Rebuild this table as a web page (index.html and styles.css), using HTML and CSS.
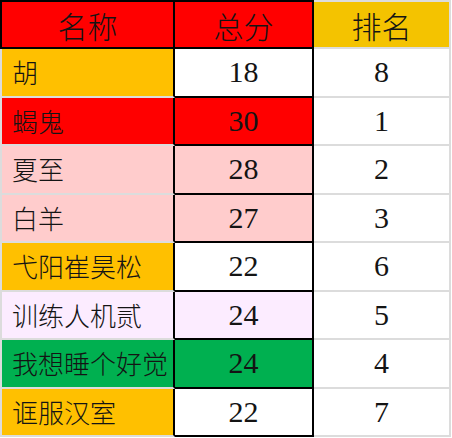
FILE: index.html
```html
<!DOCTYPE html>
<html lang="zh">
<head>
<meta charset="utf-8">
<title>排名</title>
<link rel="stylesheet" href="styles.css">
</head>
<body>
<div class="sheet">
  <div class="cell name head red">名称</div>
  <div class="cell score head red">总分</div>
  <div class="cell rank head gold">排名</div>

  <div class="cell name amber">胡</div>
  <div class="cell score num">18</div>
  <div class="cell rank num">8</div>

  <div class="cell name red">蝎鬼</div>
  <div class="cell score num red">30</div>
  <div class="cell rank num">1</div>

  <div class="cell name pink">夏至</div>
  <div class="cell score num pink">28</div>
  <div class="cell rank num">2</div>

  <div class="cell name pink">白羊</div>
  <div class="cell score num pink">27</div>
  <div class="cell rank num">3</div>

  <div class="cell name amber">弋阳崔昊松</div>
  <div class="cell score num">22</div>
  <div class="cell rank num">6</div>

  <div class="cell name lilac">训练人机贰</div>
  <div class="cell score num lilac">24</div>
  <div class="cell rank num">5</div>

  <div class="cell name green">我想睡个好觉</div>
  <div class="cell score num green">24</div>
  <div class="cell rank num">4</div>

  <div class="cell name amber">诓服汉室</div>
  <div class="cell score num">22</div>
  <div class="cell rank num">7</div>
</div>
</body>
</html>
```
FILE: styles.css
```css
html, body {
  margin: 0;
  padding: 0;
  background: #ffffff;
}

.sheet {
  display: grid;
  grid-template-columns: 175px 139px 137px;
  grid-template-rows: 49px repeat(8, 48.5px);
  font-family: "Noto Sans CJK SC", "Liberation Serif", serif;
  font-weight: 300;
  color: #141414;
}

.cell {
  box-sizing: border-box;
  display: flex;
  align-items: center;
  background: #ffffff;
  border-bottom: 2px solid #dcdcdc;
  border-right: 2px solid #dcdcdc;
  font-size: 26px;
  line-height: 1;
}

.name {
  border-left: 2px solid #dcdcdc;
  border-right-color: #000000;
  padding-left: 10px;
}

.score {
  justify-content: center;
  border-right-color: #000000;
  border-bottom-color: #000000;
}

.rank {
  justify-content: center;
}

.head {
  justify-content: center;
  padding-left: 0;
  font-size: 30px;
  border-top: 2px solid #000000;
  border-bottom-color: #000000;
}

.name.head {
  border-left-color: #000000;
}

.rank.head {
  border-top-color: #dcdcdc;
  border-bottom-color: #dcdcdc;
}

.num {
  font-family: "Liberation Serif", "Times New Roman", serif;
  font-weight: 400;
  font-size: 30px;
}

.red { background: #ff0000; }
.gold { background: #f4c300; }
.amber { background: #ffc000; }
.pink { background: #ffcccc; }
.lilac { background: #fcecff; }
.green { background: #00b050; }
```
